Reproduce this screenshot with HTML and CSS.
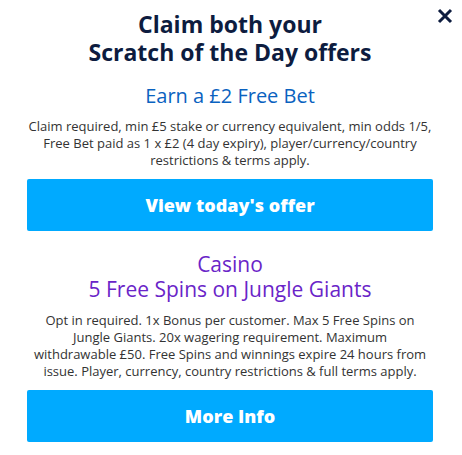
FILE: index.html
```html
<!DOCTYPE html>
<html lang="en">
<head>
<meta charset="utf-8">
<title>Scratch of the Day offers</title>
<link rel="stylesheet" href="styles.css">
</head>
<body>
<div class="modal">
  <button class="close" aria-label="Close">
    <svg width="16" height="16" viewBox="0 0 16 16"><path d="M2 2 L14 14 M14 2 L2 14" stroke="#0d1c3f" stroke-width="3" stroke-linecap="butt"/></svg>
  </button>
  <h1 class="title">Claim both your<br>Scratch of the Day offers</h1>
  <section class="offer">
    <h2 class="offer-title sport">Earn a £2 Free Bet</h2>
    <p class="terms">Claim required, min £5 stake or currency equivalent, min odds 1/5, Free Bet paid as 1 x £2 (4 day expiry), player/currency/country restrictions &amp; terms apply.</p>
    <a class="cta" href="#">View today's offer</a>
  </section>
  <section class="offer">
    <h2 class="offer-title casino">Casino<br>5 Free Spins on Jungle Giants</h2>
    <p class="terms">Opt in required. 1x Bonus per customer. Max 5 Free Spins on<br>Jungle Giants. 20x wagering requirement. Maximum<br>withdrawable £50. Free Spins and winnings expire 24 hours from<br>issue. Player, currency, country restrictions &amp; full terms apply.</p>
    <a class="cta" href="#">More Info</a>
  </section>
</div>
</body>
</html>
```
FILE: styles.css
```css
html, body {
  margin: 0;
  padding: 0;
  background: #ffffff;
}
body {
  font-family: "Open Sans", "Noto Sans", sans-serif;
  color: #333333;
}
.modal {
  position: relative;
  padding: 10px 29px 0 27px;
  text-align: center;
}
.close {
  position: absolute;
  top: 7px;
  right: 8px;
  width: 18px;
  height: 18px;
  padding: 0;
  border: 0;
  background: transparent;
  display: flex;
  align-items: center;
  justify-content: center;
}
.title {
  margin: 0;
  font-size: 23px;
  line-height: 28px;
  font-weight: 700;
  color: #0d1c3f;
}
.offer {
  display: flex;
  flex-direction: column;
  align-items: stretch;
}
.offer-title {
  margin: 0;
  font-weight: 400;
  line-height: 25px;
}
.offer-title.sport {
  margin-top: 17px;
  font-size: 20px;
  color: #0a62c0;
}
.offer-title.casino {
  margin-top: 21px;
  font-size: 21px;
  color: #6a24c8;
}
.terms {
  margin: 10px 0 10px;
  font-size: 13px;
  line-height: 17px;
}
.cta {
  display: flex;
  align-items: center;
  justify-content: center;
  height: 52px;
  background: #00aaff;
  border-radius: 2px;
  color: #ffffff;
  font-weight: 800;
  font-size: 18px;
  text-decoration: none;
}
```
